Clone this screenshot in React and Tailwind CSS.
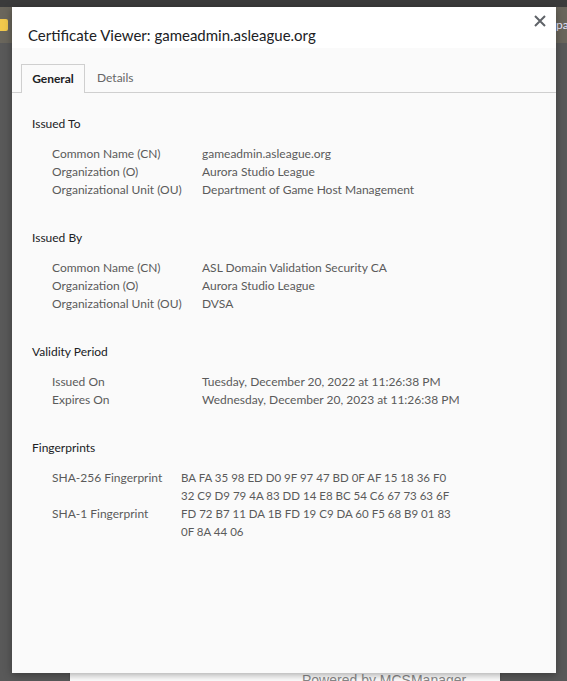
import React from "react";

const issuedTo = [
  ["Common Name (CN)", "gameadmin.asleague.org"],
  ["Organization (O)", "Aurora Studio League"],
  ["Organizational Unit (OU)", "Department of Game Host Management"],
];

const issuedBy = [
  ["Common Name (CN)", "ASL Domain Validation Security CA"],
  ["Organization (O)", "Aurora Studio League"],
  ["Organizational Unit (OU)", "DVSA"],
];

const validity = [
  ["Issued On", "Tuesday, December 20, 2022 at 11:26:38\u202FPM"],
  ["Expires On", "Wednesday, December 20, 2023 at 11:26:38\u202FPM"],
];

function Section({ title, rows }) {
  return (
    <div className="mb-[30px]">
      <div className="leading-[18px] text-[#202124] mb-[12px]">{title}</div>
      <div className="pl-[20px]">
        {rows.map(([label, value]) => (
          <div key={label} className="flex leading-[18px] text-[#5a5a5a]">
            <div className="w-[150px] shrink-0">{label}</div>
            <div>{value}</div>
          </div>
        ))}
      </div>
    </div>
  );
}

function Fingerprints() {
  return (
    <div>
      <div className="leading-[18px] text-[#202124] mb-[12px]">Fingerprints</div>
      <div className="pl-[20px] text-[#5a5a5a] leading-[18px]">
        <div className="flex">
          <div className="w-[129px] shrink-0">SHA-256 Fingerprint</div>
          <div className="text-[11.5px]">
            <div>BA FA 35 98 ED D0 9F 97 47 BD 0F AF 15 18 36 F0</div>
            <div>32 C9 D9 79 4A 83 DD 14 E8 BC 54 C6 67 73 63 6F</div>
          </div>
        </div>
        <div className="flex">
          <div className="w-[129px] shrink-0">SHA-1 Fingerprint</div>
          <div className="text-[11.5px]">
            <div>FD 72 B7 11 DA 1B FD 19 C9 DA 60 F5 68 B9 01 83</div>
            <div>0F 8A 44 06</div>
          </div>
        </div>
      </div>
    </div>
  );
}

export default function App() {
  return (
    <div className="relative w-[567px] h-[681px] overflow-hidden bg-[#595959] flex flex-col" style={{ fontFamily: 'Lato, "Noto Sans", sans-serif' }}>
      {/* browser chrome behind the dialog */}
      <div className="h-[7px] bg-[#3b3b3b]" />
      <div className="h-[36px] bg-[#6a665c] flex items-center justify-between">
        <div className="w-[8px] h-[12px] bg-[#f2c94c] rounded-r-[2px]" />
        <div className="text-[12px] leading-[16px] w-[11px] overflow-hidden whitespace-nowrap text-[#e8e8ff]">pa</div>
      </div>
      <div className="flex-1 flex flex-col">
        <div className="mt-auto ml-[70px] w-[430px] h-[8px] bg-white overflow-hidden shadow-[0_-1px_2px_rgba(0,0,0,0.3)]">
          <div className="pl-[232px] -mt-[1px] text-[14px] leading-[16px] text-[#8a8a8a] whitespace-nowrap" style={{ fontFamily: '"Liberation Sans", sans-serif' }}>
            Powered by MCSManager
          </div>
        </div>
      </div>

      {/* dialog */}
      <div className="absolute left-[12px] top-[7px] w-[544px] h-[666px] bg-[#fafafa] shadow-[0_2px_8px_rgba(0,0,0,0.35)] flex flex-col">
        <div className="h-[41px] bg-white flex items-start justify-between">
          <div className="pl-[16px] pt-[18px] text-[15px] leading-[20px] text-[#202124]">
            Certificate Viewer: gameadmin.asleague.org
          </div>
          <div className="pr-[10px] pt-[8px]">
            <svg width="12" height="12" viewBox="0 0 12 12" className="text-[#5f6368]">
              <path d="M1 1 L11 11 M11 1 L1 11" stroke="currentColor" strokeWidth="2" fill="none" />
            </svg>
          </div>
        </div>

        <div className="pt-[16px] text-[12px]">
          <div className="flex border-b border-[#cfcfcf] pl-[9px]">
            <div className="w-[64px] h-[29px] -mb-px border border-b-0 border-[#cfcfcf] bg-[#fafafa] flex items-center justify-center font-bold text-[#202124]">
              General
            </div>
            <div className="px-[12px] h-[28px] flex items-center text-[#666]">Details</div>
          </div>

          <div className="pl-[20px] pt-[22px]">
            <Section title="Issued To" rows={issuedTo} />
            <Section title="Issued By" rows={issuedBy} />
            <Section title="Validity Period" rows={validity} />
            <Fingerprints />
          </div>
        </div>
      </div>
    </div>
  );
}
